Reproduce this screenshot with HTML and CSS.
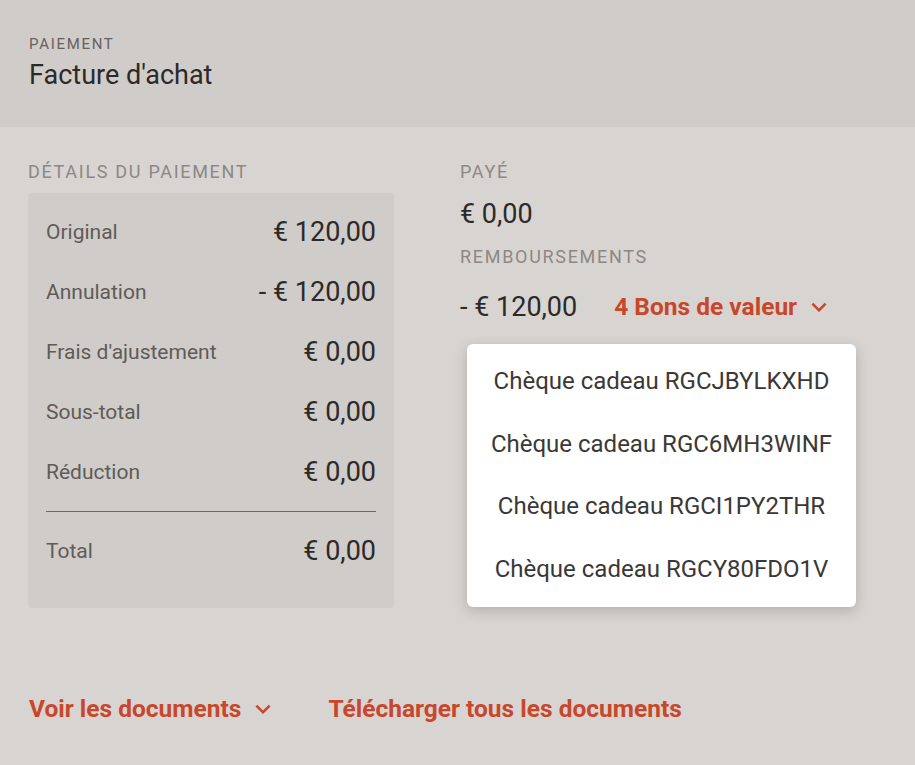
FILE: index.html
```html
<!DOCTYPE html>
<html lang="fr">
<head>
    <meta charset="UTF-8">
    <meta name="viewport" content="width=device-width, initial-scale=1.0">
    <title>Facture d'achat</title>
    <link rel="stylesheet" href="styles.css">
</head>
<body>
    <div class="header">
        <div class="overline">Paiement</div>
        <h1>Facture d'achat</h1>
    </div>

    <div class="content">
        <div class="details">
            <div class="section-label">Détails du paiement</div>
            <div class="card">
                <div class="row"><span class="label">Original</span><span class="amount">€ 120,00</span></div>
                <div class="row"><span class="label">Annulation</span><span class="amount">- € 120,00</span></div>
                <div class="row"><span class="label">Frais d'ajustement</span><span class="amount">€ 0,00</span></div>
                <div class="row"><span class="label">Sous-total</span><span class="amount">€ 0,00</span></div>
                <div class="row"><span class="label">Réduction</span><span class="amount">€ 0,00</span></div>
                <hr>
                <div class="row total"><span class="label">Total</span><span class="amount">€ 0,00</span></div>
            </div>
        </div>

        <div class="summary">
            <div class="section-label">Payé</div>
            <div class="big-amount">€ 0,00</div>
            <div class="section-label">Remboursements</div>
            <div class="refund-line">
                <span class="big-amount">- € 120,00</span>
                <a href="#" class="link">4 Bons de valeur
                    <svg class="chevron" viewBox="0 0 24 24"><path d="M7.41 8.59 12 13.17l4.59-4.58L18 10l-6 6-6-6z"/></svg>
                </a>
                <div class="menu">
                    <a href="#">Chèque cadeau RGCJBYLKXHD</a>
                    <a href="#">Chèque cadeau RGC6MH3WINF</a>
                    <a href="#">Chèque cadeau RGCI1PY2THR</a>
                    <a href="#">Chèque cadeau RGCY80FDO1V</a>
                </div>
            </div>
        </div>
    </div>

    <div class="actions">
        <a href="#" class="link">Voir les documents
            <svg class="chevron" viewBox="0 0 24 24"><path d="M7.41 8.59 12 13.17l4.59-4.58L18 10l-6 6-6-6z"/></svg>
        </a>
        <a href="#" class="link">Télécharger tous les documents</a>
    </div>
</body>
</html>
```

FILE: styles.css
```css
body {
    font-family: Roboto, "Liberation Sans", sans-serif;
    margin: 0;
    background: #d8d4d1;
    color: #2c2a29;
}
.header {
    background: #d0ccc9;
    height: 127px;
    box-sizing: border-box;
    padding: 35px 29px 0;
}
.overline {
    font-size: 15px;
    letter-spacing: 1.7px;
    text-transform: uppercase;
    color: #66625f;
}
.header h1 {
    margin: 6px 0 0;
    font-size: 27px;
    font-weight: 400;
    line-height: 32px;
    color: #2c2a29;
}
.content {
    display: flex;
    padding: 35px 28px 0;
    gap: 66px;
}
.details { width: 366px; }
.section-label {
    font-size: 18px;
    letter-spacing: 1.7px;
    text-transform: uppercase;
    color: #8c8885;
    line-height: 20px;
}
.card {
    margin-top: 11px;
    background: #d0ccc9;
    border-radius: 4px;
    padding: 9px 18px 18px;
}
.row {
    display: flex;
    justify-content: space-between;
    align-items: center;
    height: 60px;
}
.label {
    font-size: 21px;
    color: #5f5b58;
}
.amount {
    font-size: 27px;
    color: #2c2a29;
}
.card hr {
    border: none;
    border-top: 1px solid #6a6764;
    margin: 9px 0 0;
}
.row.total { height: 78px; }
.summary {
    flex-grow: 1;
}
.summary .big-amount {
    display: block;
    font-size: 27px;
    line-height: 32px;
    margin: 16px 0 17px;
}
.refund-line {
    position: relative;
    display: flex;
    align-items: center;
    gap: 37px;
    height: 32px;
    margin-top: 24px;
}
.refund-line .big-amount { margin: 0; }
.link {
    color: #c8472a;
    font-weight: 700;
    font-size: 24.5px;
    line-height: 30px;
    text-decoration: none;
    display: inline-flex;
    align-items: center;
    gap: 7px;
}
.chevron {
    width: 30px;
    height: 30px;
    fill: #c8472a;
}
.menu {
    position: absolute;
    left: 7px;
    top: 53px;
    width: 389px;
    background: #fff;
    border-radius: 6px;
    box-shadow: 0 4px 14px rgba(0, 0, 0, 0.18);
    padding: 6px 0 7px;
    display: flex;
    flex-direction: column;
}
.menu a {
    height: 62.5px;
    display: flex;
    align-items: center;
    justify-content: center;
    font-size: 24px;
    color: #3a3837;
    text-decoration: none;
}
.actions {
    display: flex;
    gap: 50px;
    padding: 86px 29px 0;
}
```
